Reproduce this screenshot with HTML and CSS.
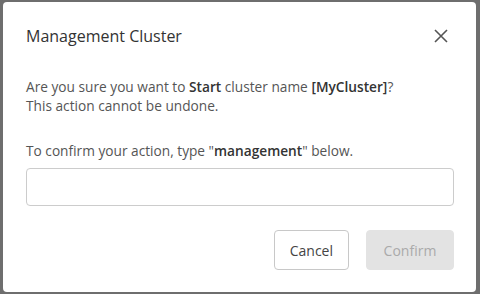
FILE: index.html
```html
<!DOCTYPE html>
<html lang="en">
<head>
    <meta charset="utf-8">
    <title>Management Cluster</title>
    <link rel="stylesheet" href="styles.css">
</head>
<body>

<div class="dialog">
    <div class="head">
        <h1>Management Cluster</h1>
        <button class="luk" aria-label="Close">
            <svg width="14" height="14" viewBox="0 0 14 14"><path d="M1 1L13 13M13 1L1 13" stroke="#555" stroke-width="1.6" fill="none"/></svg>
        </button>
    </div>

    <p class="tekst">Are you sure you want to <b>Start</b> cluster name <b>[MyCluster]</b>?<br>This action cannot be undone.</p>

    <p class="tekst bekraeft">To confirm your action, type "<b>management</b>" below.</p>

    <input class="felt" type="text">

    <div class="knapper">
        <button class="knap">Cancel</button>
        <button class="knap slukket" disabled>Confirm</button>
    </div>
</div>

</body>
</html>
```

FILE: styles.css
```css
body {
    margin: 0;
    background: #6e6e6e;
    font-family: "Open Sans", Arial, sans-serif;
    height: 294px;
    overflow: hidden;
}

.dialog {
    box-sizing: border-box;
    margin: 2px 0 0 3px;
    width: 473px;
    height: 290px;
    background: #fff;
    border-radius: 4px;
    padding: 21px 22px 0 23px;
}

.head {
    display: flex;
    justify-content: space-between;
    align-items: center;
}

h1 {
    margin: 0;
    font-size: 16px;
    font-weight: 400;
    color: #333;
    line-height: 26px;
}

.luk {
    border: none;
    background: none;
    padding: 0;
    margin-right: 6px;
    display: flex;
}

.tekst {
    margin: 0;
    font-size: 13.7px;
    line-height: 19px;
    color: #555;
}

.tekst b {
    font-weight: 600;
    color: #333;
}

.dialog > .tekst:first-of-type {
    margin-top: 28px;
}

.bekraeft {
    margin-top: 26px;
}

.felt {
    display: block;
    box-sizing: border-box;
    width: 428px;
    height: 38px;
    margin-top: 8px;
    border: 1px solid #ccc;
    border-radius: 4px;
}

.knapper {
    display: flex;
    justify-content: flex-end;
    gap: 17px;
    margin-top: 24px;
}

.knap {
    box-sizing: border-box;
    height: 40px;
    padding: 0 15px;
    border: 1px solid #c8c8c8;
    border-radius: 4px;
    background: #fff;
    font-family: "Open Sans", Arial, sans-serif;
    font-size: 14px;
    color: #444;
}

.knap.slukket {
    width: 88px;
    background: #e3e3e3;
    border-color: #e3e3e3;
    color: #aaa;
}
```
